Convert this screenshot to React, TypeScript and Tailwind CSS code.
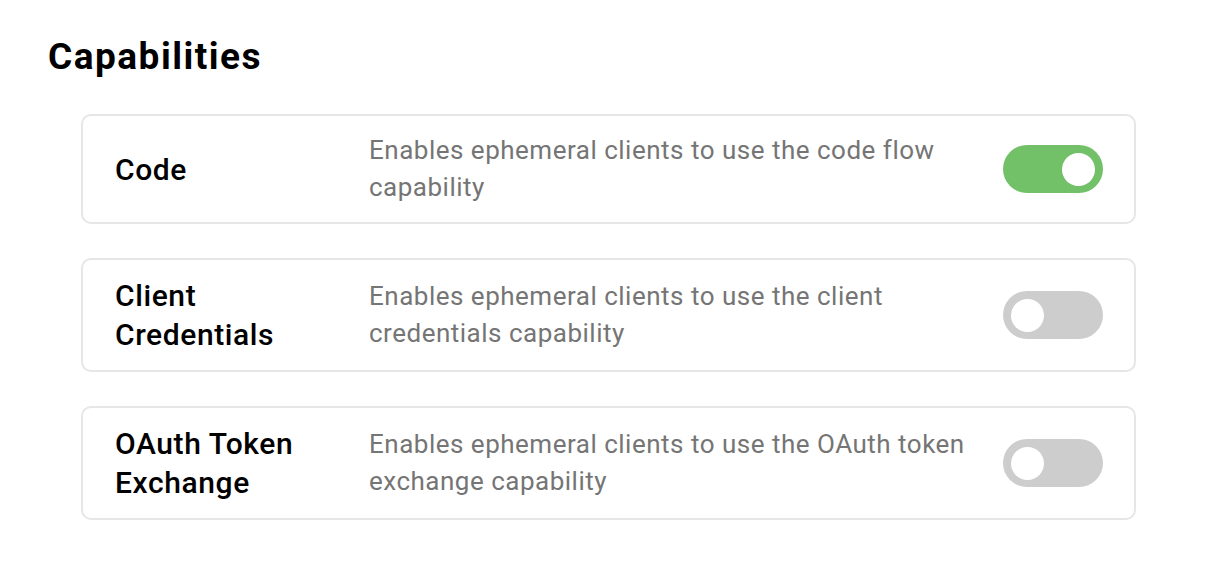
import React, { useState } from 'react';

type Capability = {
  id: string;
  title: string;
  description: string;
  enabled: boolean;
};

const initial: Capability[] = [
  { id: 'code', title: 'Code', description: 'Enables ephemeral clients to use the code flow capability', enabled: true },
  { id: 'client', title: 'Client Credentials', description: 'Enables ephemeral clients to use the client credentials capability', enabled: false },
  { id: 'token', title: 'OAuth Token Exchange', description: 'Enables ephemeral clients to use the OAuth token exchange capability', enabled: false },
];

const Toggle: React.FC<{ on: boolean; onClick: () => void }> = ({ on, onClick }) => (
  <button
    onClick={onClick}
    className={`relative flex h-[48px] w-[100px] shrink-0 items-center rounded-full px-[8px] ${
      on ? 'justify-end bg-[#72c169]' : 'justify-start bg-[#cdcdcd]'
    }`}
  >
    <span className="block h-[33px] w-[33px] rounded-full bg-white" />
  </button>
);

const App: React.FC = () => {
  const [caps, setCaps] = useState(initial);

  const flip = (id: string) =>
    setCaps((c) => c.map((x) => (x.id === id ? { ...x, enabled: !x.enabled } : x)));

  return (
    <div className="min-h-screen bg-white pl-[48px] pr-[71px] pt-[33px] font-['Roboto',sans-serif]">
      <h1 className="text-[37px] font-bold leading-[48px] tracking-[1.5px] text-black">Capabilities</h1>

      <div className="ml-[33px] mt-[33px] flex flex-col gap-[34px]">
        {caps.map((cap) => (
          <div
            key={cap.id}
            className="flex items-center rounded-[10px] border-2 border-[#e6e6e6] py-[16px] pl-[32px] pr-[31px]"
          >
            <div className="w-[210px] text-[30px] font-medium leading-[39px] tracking-[0.6px] text-black">
              {cap.title}
            </div>
            <div className="ml-[44px] w-[620px] text-[26px] leading-[37px] tracking-[0.5px] text-[#757575]">
              {cap.description}
            </div>
            <div className="ml-auto">
              <Toggle on={cap.enabled} onClick={() => flip(cap.id)} />
            </div>
          </div>
        ))}
      </div>
    </div>
  );
};

export default App;
